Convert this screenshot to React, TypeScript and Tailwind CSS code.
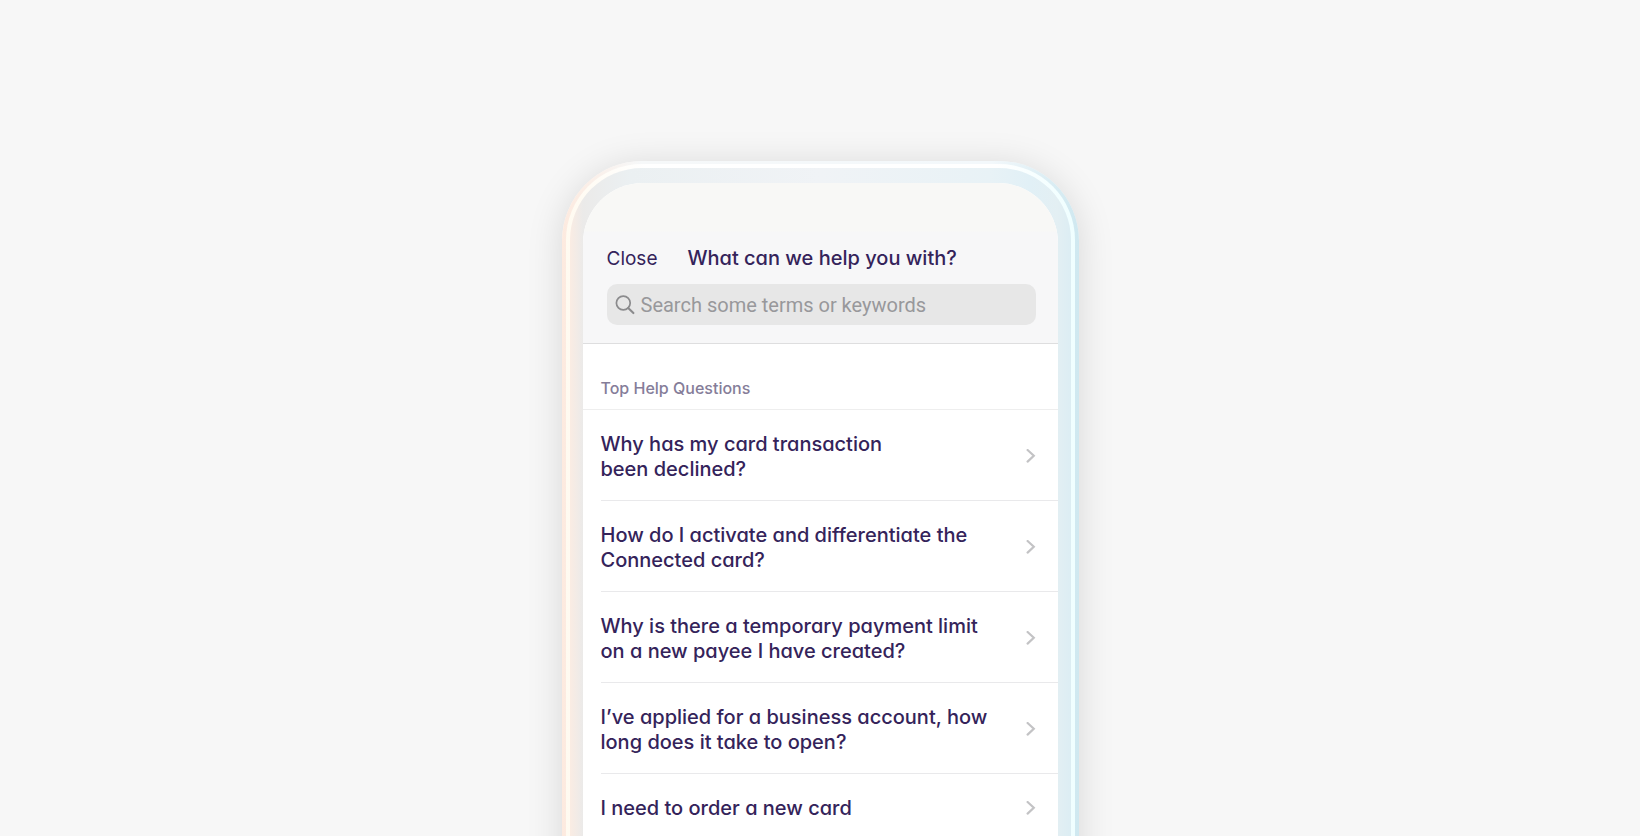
import { useState } from 'react';

const questions = [
    { id: 1, lines: ['Why has my card transaction', 'been declined?'] },
    { id: 2, lines: ['How do I activate and differentiate the', 'Connected card?'] },
    { id: 3, lines: ['Why is there a temporary payment limit', 'on a new payee I have created?'] },
    { id: 4, lines: ['I’ve applied for a business account, how', 'long does it take to open?'] },
    { id: 5, lines: ['I need to order a new card'] },
];

const SearchIcon = () => (
    <svg className="h-5 w-5 shrink-0 text-[#8b8b8d]" viewBox="0 0 20 20" fill="none" stroke="currentColor" strokeWidth="1.7" strokeLinecap="round" aria-hidden="true">
        <circle cx="8.3" cy="8" r="6.9" />
        <path d="M13.2 12.9 18.4 18.1" strokeWidth="2.1" />
    </svg>
);

const Chevron = () => (
    <svg className="h-4 w-3 shrink-0" viewBox="0 0 12 16" fill="none" stroke="#c3c3c5" strokeWidth="2.2" aria-hidden="true">
        <path d="M2.6 1 8.8 6.8l-6.2 5.8" strokeLinecap="round" />
    </svg>
);

const App = () => {
    const [term, setTerm] = useState('');

    return (
        <main className="flex h-screen justify-center overflow-hidden bg-[#f7f7f7] pt-[161px] font-['Inter',sans-serif] text-[#34235a] [font-feature-settings:'cv11']">
            {/* Phone casing: outer edge, highlight, inner bezel */}
            <div className="h-[1040px] w-full max-w-[517px] shrink-0 rounded-[80px] bg-[linear-gradient(to_right,#fdeadf,#f6f8f9_80px,#f3f8fb_430px,#cfe8f0)] px-1 pt-[3px] pb-1 shadow-[0_4px_36px_rgba(0,0,0,0.13)]">
                <div className="h-full rounded-[76px] bg-[linear-gradient(to_right,#fffaf0,#ffffff_80px,#ffffff_430px,#effeff)] p-1">
                    <div className="h-full rounded-[72px] bg-[linear-gradient(to_right,#faece3,#ebeae9_13px,#ebf0f2_60px,#f0f3f6_50%,#e8f2f6_420px,#e1f0f6_460px,#e3eff3_487px,#dcedf3)] px-[13px] py-[15px]">
                        <div className="h-full overflow-hidden rounded-[60px] bg-white">
                            <header className="border-b border-[#dededf] bg-[linear-gradient(to_bottom,#f8f8f6_48px,#f7f7f8_49px)] px-6 pt-[63px] pb-[18px]">
                                <div className="flex items-center gap-[30px] leading-[25px]">
                                    <button type="button" className="text-[19px]">Close</button>
                                    <h1 className="text-[20px] font-medium">What can we help you with?</h1>
                                </div>
                                <label className="mt-[13px] mr-[-2px] flex h-[41px] items-center gap-[6px] rounded-[10px] bg-[#e7e7e7] px-2">
                                    <SearchIcon />
                                    <input
                                        type="search"
                                        aria-label="Search"
                                        value={term}
                                        onChange={(e) => setTerm(e.target.value)}
                                        placeholder="Search some terms or keywords"
                                        className="w-full min-w-0 bg-transparent font-['Roboto',sans-serif] text-[20px] placeholder-[#98989b] outline-none"
                                    />
                                </label>
                            </header>

                            <section>
                                <h2 className="border-b border-[#eeeeee] px-[18px] pt-[34px] pb-[11px] text-[16px] leading-5 font-medium text-[#857d99]">
                                    Top Help Questions
                                </h2>
                                <ul className="pl-[18px]">
                                    {questions.map((question) => (
                                        <li key={question.id} className="border-b border-[#e9e9eb]">
                                            <a href="#" className="flex items-center justify-between pt-[22px] pr-[21px] pb-[18px] text-[20px] leading-[25px] font-medium">
                                                <span>
                                                    {question.lines.map((line) => (
                                                        <span key={line} className="block whitespace-nowrap">{line}</span>
                                                    ))}
                                                </span>
                                                <Chevron />
                                            </a>
                                        </li>
                                    ))}
                                </ul>
                            </section>
                        </div>
                    </div>
                </div>
            </div>
        </main>
    );
};

export default App;
